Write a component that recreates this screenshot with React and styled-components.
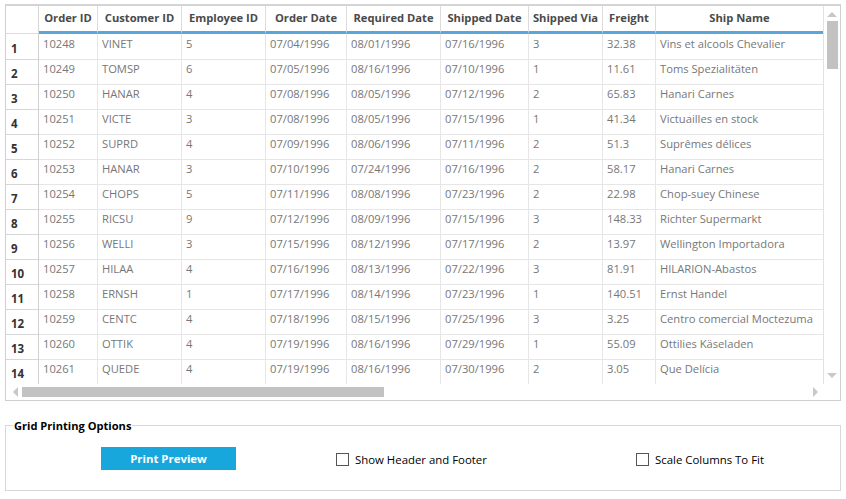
import React from "react";
import styled, { createGlobalStyle } from "styled-components";

const Global = createGlobalStyle`
  html, body { margin: 0; padding: 0; background: #fff; }
  body { font-family: "Open Sans", "Noto Sans", sans-serif; font-size: 12px; }
  * { box-sizing: border-box; }
`;

const columns = [
  { key: "id", title: "Order ID", w: 59 },
  { key: "cust", title: "Customer ID", w: 84 },
  { key: "emp", title: "Employee ID", w: 84 },
  { key: "od", title: "Order Date", w: 81 },
  { key: "rd", title: "Required Date", w: 94 },
  { key: "sd", title: "Shipped Date", w: 88 },
  { key: "via", title: "Shipped Via", w: 74 },
  { key: "fr", title: "Freight", w: 53 },
  { key: "name", title: "Ship Name", w: 168 },
];

const rows = [
  ["10248", "VINET", "5", "07/04/1996", "08/01/1996", "07/16/1996", "3", "32.38", "Vins et alcools Chevalier"],
  ["10249", "TOMSP", "6", "07/05/1996", "08/16/1996", "07/10/1996", "1", "11.61", "Toms Spezialitäten"],
  ["10250", "HANAR", "4", "07/08/1996", "08/05/1996", "07/12/1996", "2", "65.83", "Hanari Carnes"],
  ["10251", "VICTE", "3", "07/08/1996", "08/05/1996", "07/15/1996", "1", "41.34", "Victuailles en stock"],
  ["10252", "SUPRD", "4", "07/09/1996", "08/06/1996", "07/11/1996", "2", "51.3", "Suprêmes délices"],
  ["10253", "HANAR", "3", "07/10/1996", "07/24/1996", "07/16/1996", "2", "58.17", "Hanari Carnes"],
  ["10254", "CHOPS", "5", "07/11/1996", "08/08/1996", "07/23/1996", "2", "22.98", "Chop-suey Chinese"],
  ["10255", "RICSU", "9", "07/12/1996", "08/09/1996", "07/15/1996", "3", "148.33", "Richter Supermarkt"],
  ["10256", "WELLI", "3", "07/15/1996", "08/12/1996", "07/17/1996", "2", "13.97", "Wellington Importadora"],
  ["10257", "HILAA", "4", "07/16/1996", "08/13/1996", "07/22/1996", "3", "81.91", "HILARION-Abastos"],
  ["10258", "ERNSH", "1", "07/17/1996", "08/14/1996", "07/23/1996", "1", "140.51", "Ernst Handel"],
  ["10259", "CENTC", "4", "07/18/1996", "08/15/1996", "07/25/1996", "3", "3.25", "Centro comercial Moctezuma"],
  ["10260", "OTTIK", "4", "07/19/1996", "08/16/1996", "07/29/1996", "1", "55.09", "Ottilies Käseladen"],
  ["10261", "QUEDE", "4", "07/19/1996", "08/16/1996", "07/30/1996", "2", "3.05", "Que Delícia"],
];

const template = `33px ${columns.map((c) => c.w + "px").join(" ")}`;

const Page = styled.div`
  padding: 4px 5px 0 5px;
  width: 846px;
`;

const GridFrame = styled.div`
  width: 836px;
  border: 1px solid #cfcfcf;
  border-top: 2px solid #d4d4d4;
  display: flex;
  flex-direction: column;
`;

const Body = styled.div`
  display: flex;
`;

const Table = styled.div`
  width: 818px;
  overflow: hidden;
  border-right: 1px solid #e2e2e2;
`;

const Row = styled.div`
  display: grid;
  grid-template-columns: ${template};
  height: ${(p) => (p.$header ? "28px" : "25px")};
`;

const Corner = styled.div`
  border-right: 1px solid #d6d6d6;
  border-bottom: 1px solid #dcdcdc;
`;

const HeadCell = styled.div`
  border-right: 1px solid #dcdcdc;
  border-bottom: 3px solid #5aa6da;
  color: #4a4a4a;
  font-weight: 700;
  font-size: 11.2px;
  text-align: center;
  line-height: 24px;
  white-space: nowrap;
  overflow: hidden;
`;

const RowHead = styled.div`
  border-right: 1px solid #d0d0d0;
  border-bottom: 1px solid #d6d6d6;
  color: #333;
  font-weight: 700;
  font-size: 11.5px;
  padding-left: 5px;
  padding-top: 5px;
  line-height: 20px;
`;

const Cell = styled.div`
  border-right: 1px solid #e6e6e6;
  border-bottom: 1px solid #e6e6e6;
  color: #777;
  font-size: 11.2px;
  padding-left: 4px;
  line-height: 20px;
  white-space: nowrap;
  overflow: hidden;
`;

const VScroll = styled.div`
  width: 16px;
  display: flex;
  flex-direction: column;
  align-items: center;
`;

const Arrow = styled.div`
  width: 0;
  height: 0;
  border-style: solid;
  ${(p) =>
    p.$dir === "up"
      ? "border-width: 0 5px 5px 5px; border-color: transparent transparent #c8c8c8 transparent;"
      : p.$dir === "down"
      ? "border-width: 5px 5px 0 5px; border-color: #c8c8c8 transparent transparent transparent;"
      : p.$dir === "left"
      ? "border-width: 5px 5px 5px 0; border-color: transparent #c8c8c8 transparent transparent;"
      : "border-width: 5px 0 5px 5px; border-color: transparent transparent transparent #c8c8c8;"}
`;

const VThumb = styled.div`
  width: 11px;
  height: 48px;
  background: #c2c2c2;
  margin-top: 4px;
`;

const Spacer = styled.div`
  flex: 1;
`;

const Gap = styled.div`
  height: 6px;
  flex-shrink: 0;
`;

const HScroll = styled.div`
  height: 16px;
  display: flex;
  align-items: center;
  padding: 0 6px 0 7px;
  width: 818px;
`;

const HThumb = styled.div`
  width: 362px;
  height: 10px;
  background: #c2c2c2;
  margin-left: 4px;
`;

const Group = styled.fieldset`
  margin: 17px 0 0 0;
  padding: 0;
  width: 836px;
  height: 73px;
  border: 1px solid #d8d8d8;
  min-width: 0;
`;

const Legend = styled.legend`
  font-family: "Open Sans", "Noto Sans", sans-serif;
  font-weight: 700;
  font-size: 11.1px;
  color: #000;
  padding: 0 1px;
  margin-left: 7px;
`;

const GroupContent = styled.div`
  display: flex;
  align-items: center;
  padding: 14px 0 0 95px;
`;

const Button = styled.button`
  width: 135px;
  height: 23px;
  flex-shrink: 0;
  background: #17a7dd;
  color: #fff;
  border: none;
  font-family: "Open Sans", "Noto Sans", sans-serif;
  font-weight: 700;
  font-size: 11.4px;
  margin-right: 100px;
  padding: 0;
`;

const CheckItem = styled.label`
  display: flex;
  align-items: center;
  gap: 6px;
  flex-shrink: 0;
  width: ${(p) => p.$w || "auto"};
  color: #000;
  font-size: 11.4px;
  margin-top: 1px;
`;

const Box = styled.span`
  width: 13px;
  height: 13px;
  border: 1px solid #555;
  background: #fff;
`;

export default function App() {
  return (
    <>
      <Global />
      <Page>
        <GridFrame>
          <Body>
            <Table>
              <Row $header>
                <Corner />
                {columns.map((c) => (
                  <HeadCell key={c.key}>{c.title}</HeadCell>
                ))}
              </Row>
              {rows.map((r, i) => (
                <Row key={i}>
                  <RowHead>{i + 1}</RowHead>
                  {r.map((v, j) => (
                    <Cell key={j}>{v}</Cell>
                  ))}
                </Row>
              ))}
            </Table>
            <VScroll>
              <Gap />
              <Arrow $dir="up" />
              <VThumb />
              <Spacer />
              <Arrow $dir="down" />
              <Gap />
            </VScroll>
          </Body>
          <HScroll>
            <Arrow $dir="left" />
            <HThumb />
            <Spacer />
            <Arrow $dir="right" />
          </HScroll>
        </GridFrame>
        <Group>
          <Legend>Grid Printing Options</Legend>
          <GroupContent>
            <Button>Print Preview</Button>
            <CheckItem $w="300px">
              <Box />
              Show Header and Footer
            </CheckItem>
            <CheckItem>
              <Box />
              Scale Columns To Fit
            </CheckItem>
          </GroupContent>
        </Group>
      </Page>
    </>
  );
}
